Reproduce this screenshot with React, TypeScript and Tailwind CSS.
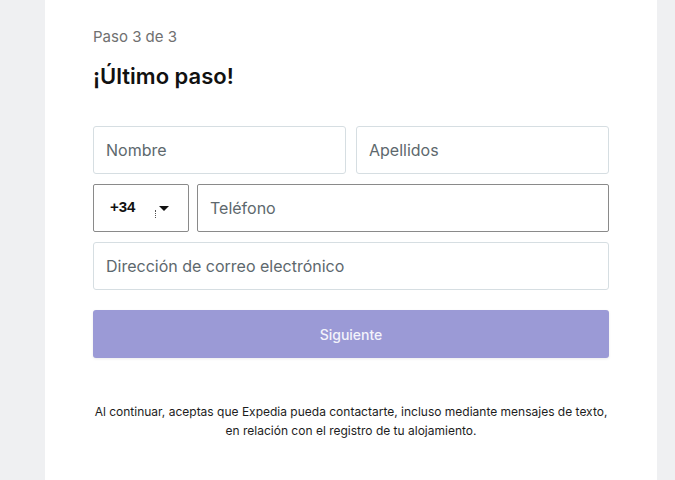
import React from "react";

export default function App() {
  return (
    <div className="w-[675px] h-[480px] bg-[#eff0f2] flex overflow-hidden" style={{ fontFamily: "Inter, 'Liberation Sans', sans-serif" }}>
      <div className="ml-[45px] w-[612px] h-full bg-white px-12 pt-[27px]">
        <div className="text-[15px] leading-[20px] text-[#707070]">Paso 3 de 3</div>
        <h1 className="mt-[14px] text-[22px] leading-[30px] font-semibold text-[#111]">¡Último paso!</h1>
        <div className="mt-[35px] flex flex-col gap-[10px]">
          <div className="flex gap-[10px]">
            <div className="flex-1 h-12 border border-[#d6dee2] rounded-[3px] flex items-center px-3 text-[16px] text-[#5d686d]">Nombre</div>
            <div className="flex-1 h-12 border border-[#d6dee2] rounded-[3px] flex items-center px-3 text-[16px] text-[#5d686d]">Apellidos</div>
          </div>
          <div className="flex gap-2">
            <div className="w-24 h-12 border border-[#8a8a8a] rounded-[2px] flex items-center pl-[16px] relative">
              <span className="text-[15px] font-bold text-[#111] -mt-[2px]" style={{ fontFamily: "'Liberation Sans', Arial, sans-serif" }}>+34</span>
              <span className="absolute left-[61px] top-[25px] w-px h-[8px] border-l border-dotted border-[#555]"></span>
              <svg className="absolute left-[65px] top-[21px]" width="10" height="5" viewBox="0 0 10 5">
                <path d="M0 0 L10 0 L5 5 Z" fill="#111" />
              </svg>
            </div>
            <div className="flex-1 h-12 border border-[#8a8a8a] rounded-[2px] flex items-center px-3 text-[16px] text-[#5d686d]">Teléfono</div>
          </div>
          <div className="h-12 border border-[#d6dee2] rounded-[3px] flex items-center px-3 text-[16px] text-[#5d686d]">Dirección de correo electrónico</div>
        </div>
        <button className="mt-5 w-full h-12 rounded-[3px] bg-[#9b9ad6] text-[14px] font-medium text-[#f3f3fb] shadow-[0_1px_3px_rgba(0,0,0,0.08)]">Siguiente</button>
        <p className="mt-[44px] text-center text-[12px] leading-[19px] text-[#1d1d1d]">
          Al continuar, aceptas que Expedia pueda contactarte, incluso mediante mensajes de texto,<br />en relación con el registro de tu alojamiento.
        </p>
      </div>
    </div>
  );
}
